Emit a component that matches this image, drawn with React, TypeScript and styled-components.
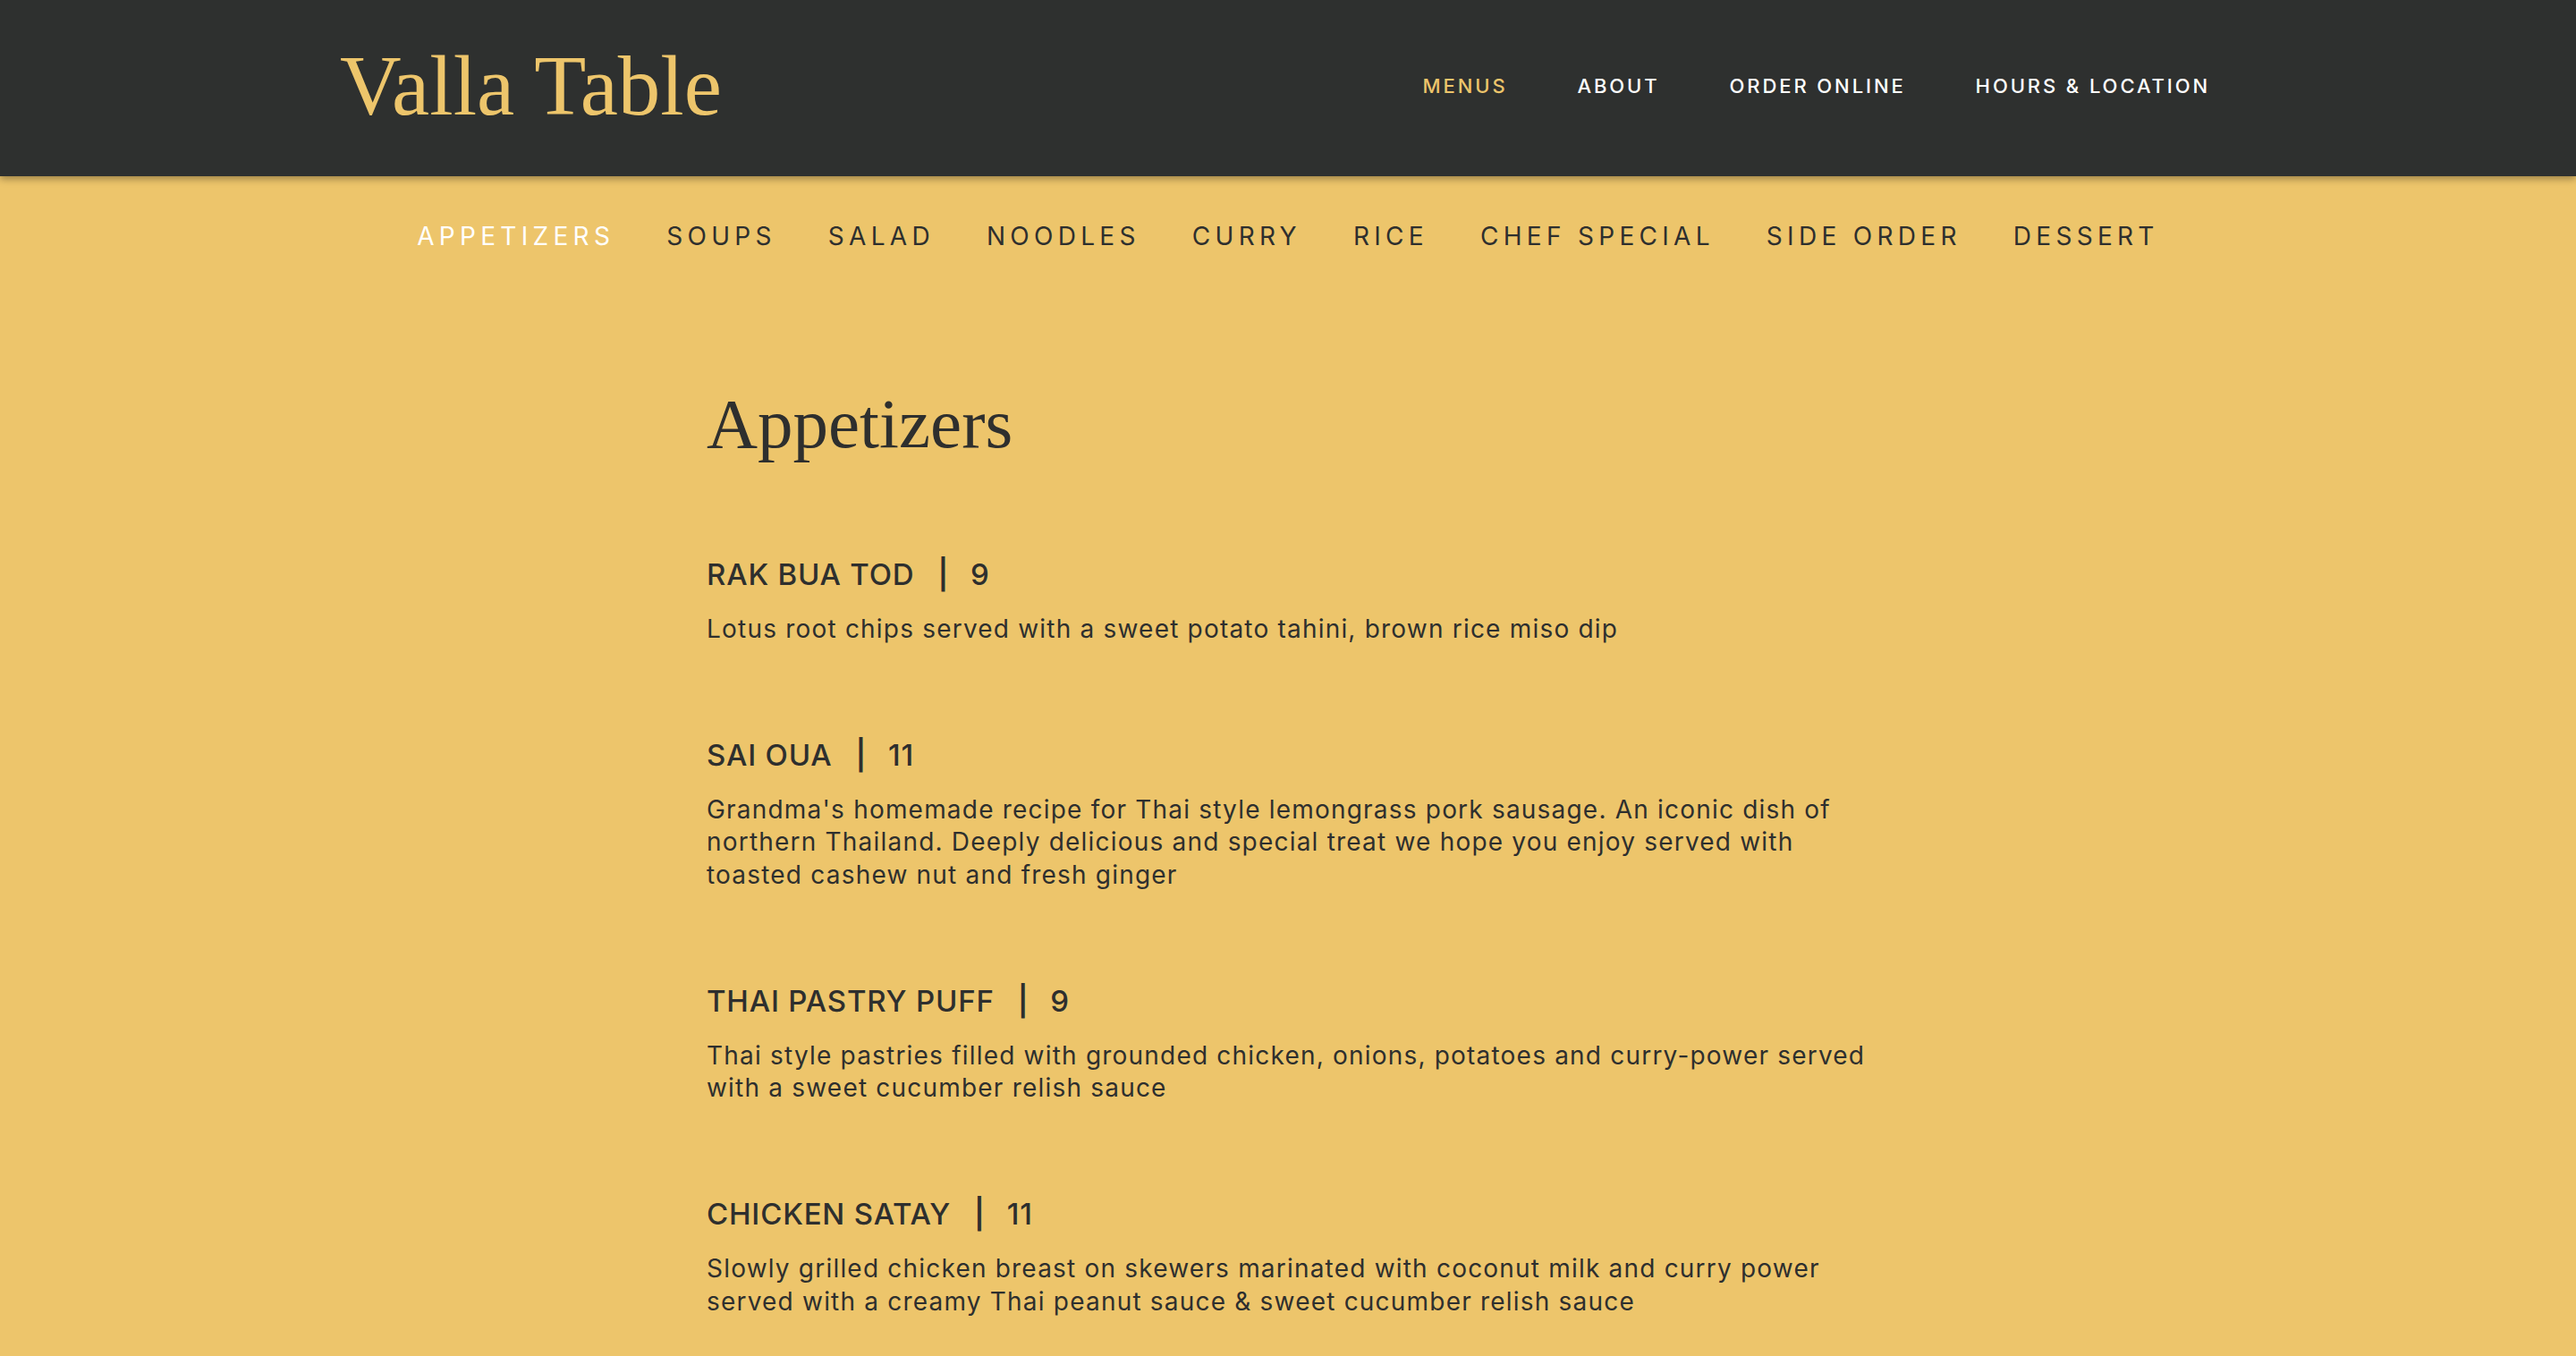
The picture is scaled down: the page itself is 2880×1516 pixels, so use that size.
import styled, { createGlobalStyle } from 'styled-components';

const GlobalStyle = createGlobalStyle`
  html, body {
    margin: 0;
    padding: 0;
    background: #edc56b;
  }
  body {
    font-family: Inter, "Noto Sans", sans-serif;
    color: #2e2f2e;
  }
`;

const Page = styled.div`
  min-height: 1516px;
  background: #edc56b;
`;

const Header = styled.header`
  height: 197px;
  background: #2e302f;
  box-shadow: 0 3px 8px rgba(0, 0, 0, 0.35);
  position: relative;
  z-index: 1;
`;

const HeaderInner = styled.div`
  width: 2120px;
  height: 100%;
  margin: 0 auto;
  padding-right: 29px;
  box-sizing: border-box;
  display: flex;
  align-items: center;
  justify-content: space-between;
`;

const Logo = styled.h1`
  margin: 0;
  font-family: "Liberation Serif", serif;
  font-weight: 400;
  font-size: 95px;
  line-height: 1;
  color: #edc56b;
  padding-bottom: 4px;
`;

const TopNav = styled.nav`
  display: flex;
  gap: 78px;
  padding-bottom: 6px;
`;

const TopLink = styled.a<{ $active?: boolean }>`
  font-family: Inter, sans-serif;
  font-size: 22px;
  font-weight: 500;
  letter-spacing: 2.9px;
  text-transform: uppercase;
  color: ${(p) => (p.$active ? '#edc56b' : '#ffffff')};
  text-decoration: none;
`;

const CategoryNav = styled.nav`
  display: flex;
  justify-content: center;
  gap: 58px;
  padding: 52px 0;
`;

const CategoryLink = styled.a<{ $active?: boolean }>`
  font-family: Inter, sans-serif;
  font-size: 28px;
  line-height: 30px;
  font-weight: 400;
  letter-spacing: 5.3px;
  color: ${(p) => (p.$active ? '#ffffff' : '#2e2f2e')};
  text-decoration: none;
`;

const Content = styled.main`
  width: 1300px;
  margin: 0 auto;
  padding: 96px 0 80px;
`;

const Title = styled.h2`
  margin: 0 0 100px;
  font-family: "Liberation Serif", serif;
  font-weight: 400;
  font-size: 79px;
  line-height: 1.2;
  color: #2e2f2e;
`;

const Item = styled.section`
  margin-bottom: 102px;
`;

const ItemName = styled.h3`
  margin: 0 0 22px;
  font-family: Inter, sans-serif;
  font-weight: 500;
  font-size: 33px;
  line-height: 41px;
  letter-spacing: 0.8px;
  color: #2e2f2e;
`;

const Sep = styled.span`
  margin: 0 24px 0 26px;
  font-weight: 600;
`;

const Description = styled.p`
  margin: 0;
  font-family: Inter, sans-serif;
  font-size: 28px;
  line-height: 36.7px;
  letter-spacing: 1.2px;
  color: #2e2f2e;
`;

const topLinks = ['Menus', 'About', 'Order Online', 'Hours & Location'];

const categories = [
  'APPETIZERS',
  'SOUPS',
  'SALAD',
  'NOODLES',
  'CURRY',
  'RICE',
  'CHEF SPECIAL',
  'SIDE ORDER',
  'DESSERT',
];

const items = [
  {
    name: 'RAK BUA TOD',
    price: '9',
    text: 'Lotus root chips served with a sweet potato tahini, brown rice miso dip',
  },
  {
    name: 'SAI OUA',
    price: '11',
    text: "Grandma's homemade recipe for Thai style lemongrass pork sausage. An iconic dish of northern Thailand. Deeply delicious and special treat we hope you enjoy served with toasted cashew nut and fresh ginger",
  },
  {
    name: 'THAI PASTRY PUFF',
    price: '9',
    text: 'Thai style pastries filled with grounded chicken, onions, potatoes and curry-power served with a sweet cucumber relish sauce',
  },
  {
    name: 'CHICKEN SATAY',
    price: '11',
    text: 'Slowly grilled chicken breast on skewers marinated with coconut milk and curry power served with a creamy Thai peanut sauce & sweet cucumber relish sauce',
  },
];

function App() {
  return (
    <Page>
      <GlobalStyle />
      <Header>
        <HeaderInner>
          <Logo>Valla Table</Logo>
          <TopNav>
            {topLinks.map((l, i) => (
              <TopLink key={l} href="#" $active={i === 0}>
                {l}
              </TopLink>
            ))}
          </TopNav>
        </HeaderInner>
      </Header>
      <CategoryNav>
        {categories.map((c, i) => (
          <CategoryLink key={c} href="#" $active={i === 0}>
            {c}
          </CategoryLink>
        ))}
      </CategoryNav>
      <Content>
        <Title>Appetizers</Title>
        {items.map((item) => (
          <Item key={item.name}>
            <ItemName>
              {item.name}
              <Sep>|</Sep>
              {item.price}
            </ItemName>
            <Description>{item.text}</Description>
          </Item>
        ))}
      </Content>
    </Page>
  );
}

export default App;
